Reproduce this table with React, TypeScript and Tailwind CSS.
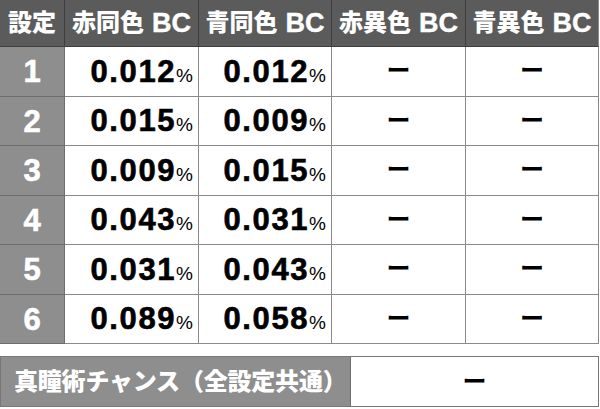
const jp = "font-['Liberation_Sans','Noto_Sans_CJK_JP',sans-serif]";

const rows = [
  ["1", "0.012", "0.012"],
  ["2", "0.015", "0.009"],
  ["3", "0.009", "0.015"],
  ["4", "0.043", "0.031"],
  ["5", "0.031", "0.043"],
  ["6", "0.089", "0.058"],
];

const heads = ["設定", "赤同色", "青同色", "赤異色", "青異色"];

function Rate({ v }: { v: string }) {
  return (
    <div className="flex h-full items-center justify-end border-r border-b border-[#8a8a8a] bg-white pr-[5px]">
      <span className="text-[31px] font-bold leading-none tracking-[1.6px] text-black [-webkit-text-stroke:0.6px_black]">{v}</span>
      <span className="mt-[8px] text-[19px] leading-none text-black">%</span>
    </div>
  );
}

function Dash({ className = "" }: { className?: string }) {
  return (
    <div className={`flex h-full items-center justify-center bg-white ${className}`}>
      <span className="text-[24px] font-bold leading-none text-black">ー</span>
    </div>
  );
}

export default function App() {
  return (
    <div className={`w-[600px] h-[409px] bg-white ${jp}`}>
      <div className="grid w-[599px] grid-cols-[65px_134px_133px_134px_133px] grid-rows-[47px_repeat(6,49.5px)]">
        {heads.map((h, i) => (
          <div
            key={h}
            className={`flex items-center justify-center whitespace-nowrap border-r border-b border-[#3e3e3e] bg-[#5b5b5b] font-black leading-none text-white ${i === 4 ? "border-r-[#8a8a8a]" : ""}`}
          >
            <span className="text-[24px]">{h}</span>
            {i > 0 && <span className="ml-[8px] text-[27px] font-bold [-webkit-text-stroke:0.4px_white]">BC</span>}
          </div>
        ))}
        {rows.map(([n, a, b]) => (
          <div key={n} className="contents">
            <div className="flex items-center justify-center border-r border-b border-[#6e6e6e] bg-[#8e8e8e] pt-[1px] text-[31px] font-bold leading-none text-white [-webkit-text-stroke:0.6px_white]">
              {n}
            </div>
            <Rate v={a} />
            <Rate v={b} />
            <Dash className="border-r border-b border-[#8a8a8a]" />
            <Dash className="border-r border-b border-[#8a8a8a]" />
          </div>
        ))}
      </div>
      <div className="mt-[12px] grid h-[51px] w-[599px] grid-cols-[350px_1fr] border border-[#777]">
        <div className="flex items-center whitespace-nowrap border-r border-[#6e6e6e] bg-[#8e8e8e] pl-[13px] text-[24px] font-black leading-none tracking-[-0.2px] text-white">
          真瞳術チャンス（全設定共通）
        </div>
        <Dash />
      </div>
    </div>
  );
}
